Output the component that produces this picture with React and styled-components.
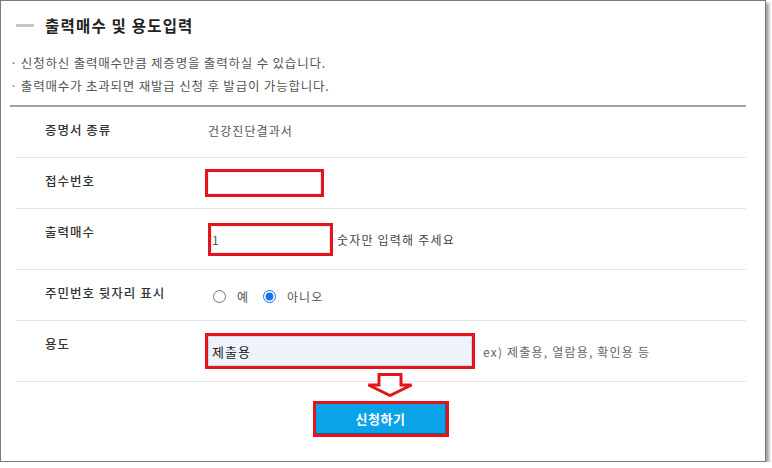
import React from 'react';
import styled, { createGlobalStyle } from 'styled-components';

const GlobalStyle = createGlobalStyle`
  html, body {
    margin: 0;
    padding: 0;
    background: #ffffff;
  }
  body {
    font-family: 'Noto Sans CJK KR', 'Noto Sans', sans-serif;
    color: #333;
  }
`;

const ANNOTATION_RED = '#e3141b';

const rows = [
  { label: '증명서 종류', height: 51 },
  { label: '접수번호', height: 51 },
  { label: '출력매수', height: 61 },
  { label: '주민번호 뒷자리 표시', height: 51 },
  { label: '용도', height: 61 },
];

const App = () => {
  const [showBack, setShowBack] = React.useState('no');
  const [count, setCount] = React.useState('1');
  const [purpose, setPurpose] = React.useState('제출용');

  return (
    <>
      <GlobalStyle />
      <Frame>
        <Header>
          <TitleBar />
          <Title>출력매수 및 용도입력</Title>
        </Header>
        <Notes>
          <li>신청하신 출력매수만큼 제증명을 출력하실 수 있습니다.</li>
          <li>출력매수가 초과되면 재발급 신청 후 발급이 가능합니다.</li>
        </Notes>
        <Table>
          <Row height={rows[0].height}>
            <Label>{rows[0].label}</Label>
            <Cell>
              <Value>건강진단결과서</Value>
            </Cell>
          </Row>
          <Row height={rows[1].height}>
            <Label>{rows[1].label}</Label>
            <Cell>
              <Input width={119} height={28} />
            </Cell>
          </Row>
          <Row height={rows[2].height}>
            <Label>{rows[2].label}</Label>
            <Cell>
              <Input
                width={125}
                height={33}
                offset={3}
                value={count}
                onChange={(e) => setCount(e.target.value)}
              />
              <Hint>숫자만 입력해 주세요</Hint>
            </Cell>
          </Row>
          <Row height={rows[3].height}>
            <Label>{rows[3].label}</Label>
            <Cell>
              <RadioGroup>
                <RadioLabel>
                  <Radio
                    type="radio"
                    name="showBack"
                    checked={showBack === 'yes'}
                    onChange={() => setShowBack('yes')}
                  />
                  예
                </RadioLabel>
                <RadioLabel>
                  <Radio
                    type="radio"
                    name="showBack"
                    checked={showBack === 'no'}
                    onChange={() => setShowBack('no')}
                  />
                  아니오
                </RadioLabel>
              </RadioGroup>
            </Cell>
          </Row>
          <Row height={rows[4].height}>
            <Label>{rows[4].label}</Label>
            <Cell>
              <Input
                width={270}
                height={36}
                filled
                value={purpose}
                onChange={(e) => setPurpose(e.target.value)}
              />
              <Example>ex) 제출용, 열람용, 확인용 등</Example>
            </Cell>
          </Row>
        </Table>
        <Actions>
          <ButtonMark>
            <Arrow viewBox="0 0 46 24">
              <polygon points="12,1.5 34,1.5 34,12 44.5,12 23,22.5 1.5,12 12,12" />
            </Arrow>
            <SubmitButton type="button">신청하기</SubmitButton>
          </ButtonMark>
        </Actions>
      </Frame>
    </>
  );
};

const Frame = styled.div`
  box-sizing: border-box;
  width: 766px;
  height: 462px;
  padding: 0 19px 0 15px;
  border: 1px solid #7a7a7a;
  background: #fff;
  box-shadow: 3px 3px 3px rgba(0, 0, 0, 0.38);
`;

const Header = styled.div`
  display: flex;
  align-items: center;
  height: 48px;
`;

const TitleBar = styled.span`
  width: 18px;
  height: 3px;
  margin-right: 11px;
  background: #c6c6c6;
`;

const Title = styled.h2`
  margin: 0;
  font-size: 15.5px;
  font-weight: 700;
  color: #222;
  letter-spacing: 1.2px;
`;

const Notes = styled.ul`
  list-style: none;
  margin: 2px 0 0 -6px;
  padding: 0 0 8px;
  border-bottom: 2px solid #a3a3a3;

  li {
    font-size: 12.5px;
    line-height: 23px;
    color: #555;
    letter-spacing: 0.8px;
  }

  li::before {
    content: '·';
    margin-right: 3px;
    color: #777;
  }
`;

const Table = styled.div`
  display: flex;
  flex-direction: column;
`;

const Row = styled.div`
  box-sizing: border-box;
  display: flex;
  height: ${(props) => props.height}px;
  border-bottom: 1px solid #e4e4e4;
`;

const Label = styled.div`
  box-sizing: border-box;
  flex: 0 0 189px;
  padding: 14px 0 0 29px;
  font-size: 12.5px;
  line-height: 18px;
  font-weight: 500;
  color: #333;
  letter-spacing: 1px;
`;

const Cell = styled.div`
  display: flex;
  align-items: center;
  flex: 1;
  font-size: 12px;
  color: #555;
`;

const Value = styled.span`
  padding: 0 0 3px 3px;
  letter-spacing: 1.1px;
`;

const Input = styled.input`
  box-sizing: border-box;
  width: ${(props) => props.width}px;
  height: ${(props) => props.height}px;
  margin: 0 4px 0 ${(props) => props.offset || 0}px;
  padding: 0 4px 0 ${(props) => (props.filled ? 4 : 1)}px;
  border: 3px solid ${ANNOTATION_RED};
  outline: none;
  background: ${(props) => (props.filled ? '#eef3fb' : '#fff')};
  box-shadow: inset 0 0 0 1px ${(props) => (props.filled ? '#cfd7e6' : '#ececec')};
  font-family: inherit;
  font-size: ${(props) => (props.filled ? '13px' : '12px')};
  letter-spacing: ${(props) => (props.filled ? '1px' : '0')};
  color: ${(props) => (props.filled ? '#222' : '#555')};
`;

const Hint = styled.span`
  color: #444;
  letter-spacing: 1.2px;
`;

const Example = styled.span`
  margin-left: 4px;
  color: #666;
  letter-spacing: 1.2px;
`;

const RadioGroup = styled.div`
  display: flex;
  align-items: center;
  gap: 14px;
  padding: 3px 0 0 8px;
`;

const RadioLabel = styled.label`
  display: flex;
  align-items: center;
  gap: 11px;
  font-size: 12px;
  color: #555;
  letter-spacing: 1px;
`;

const Radio = styled.input`
  width: 13px;
  height: 13px;
  margin: 0;
  accent-color: #1a73e8;
`;

const Actions = styled.div`
  display: flex;
  justify-content: center;
  padding-top: 19px;
`;

const ButtonMark = styled.div`
  position: relative;
  display: flex;
  border: 3px solid ${ANNOTATION_RED};
`;

const Arrow = styled.svg`
  position: absolute;
  left: 51px;
  top: -31px;
  width: 46px;
  height: 24px;

  polygon {
    fill: #fff;
    stroke: ${ANNOTATION_RED};
    stroke-width: 3;
    stroke-linejoin: miter;
  }
`;

const SubmitButton = styled.button`
  box-sizing: border-box;
  width: 130px;
  height: 30px;
  border: none;
  border-right: 1px solid #2c5d86;
  border-bottom: 1px solid #2c5d86;
  background: #0aa2e8;
  color: #fff;
  font-family: inherit;
  font-size: 13px;
  font-weight: 700;
  letter-spacing: 0.5px;
  cursor: pointer;
`;

export default App;
